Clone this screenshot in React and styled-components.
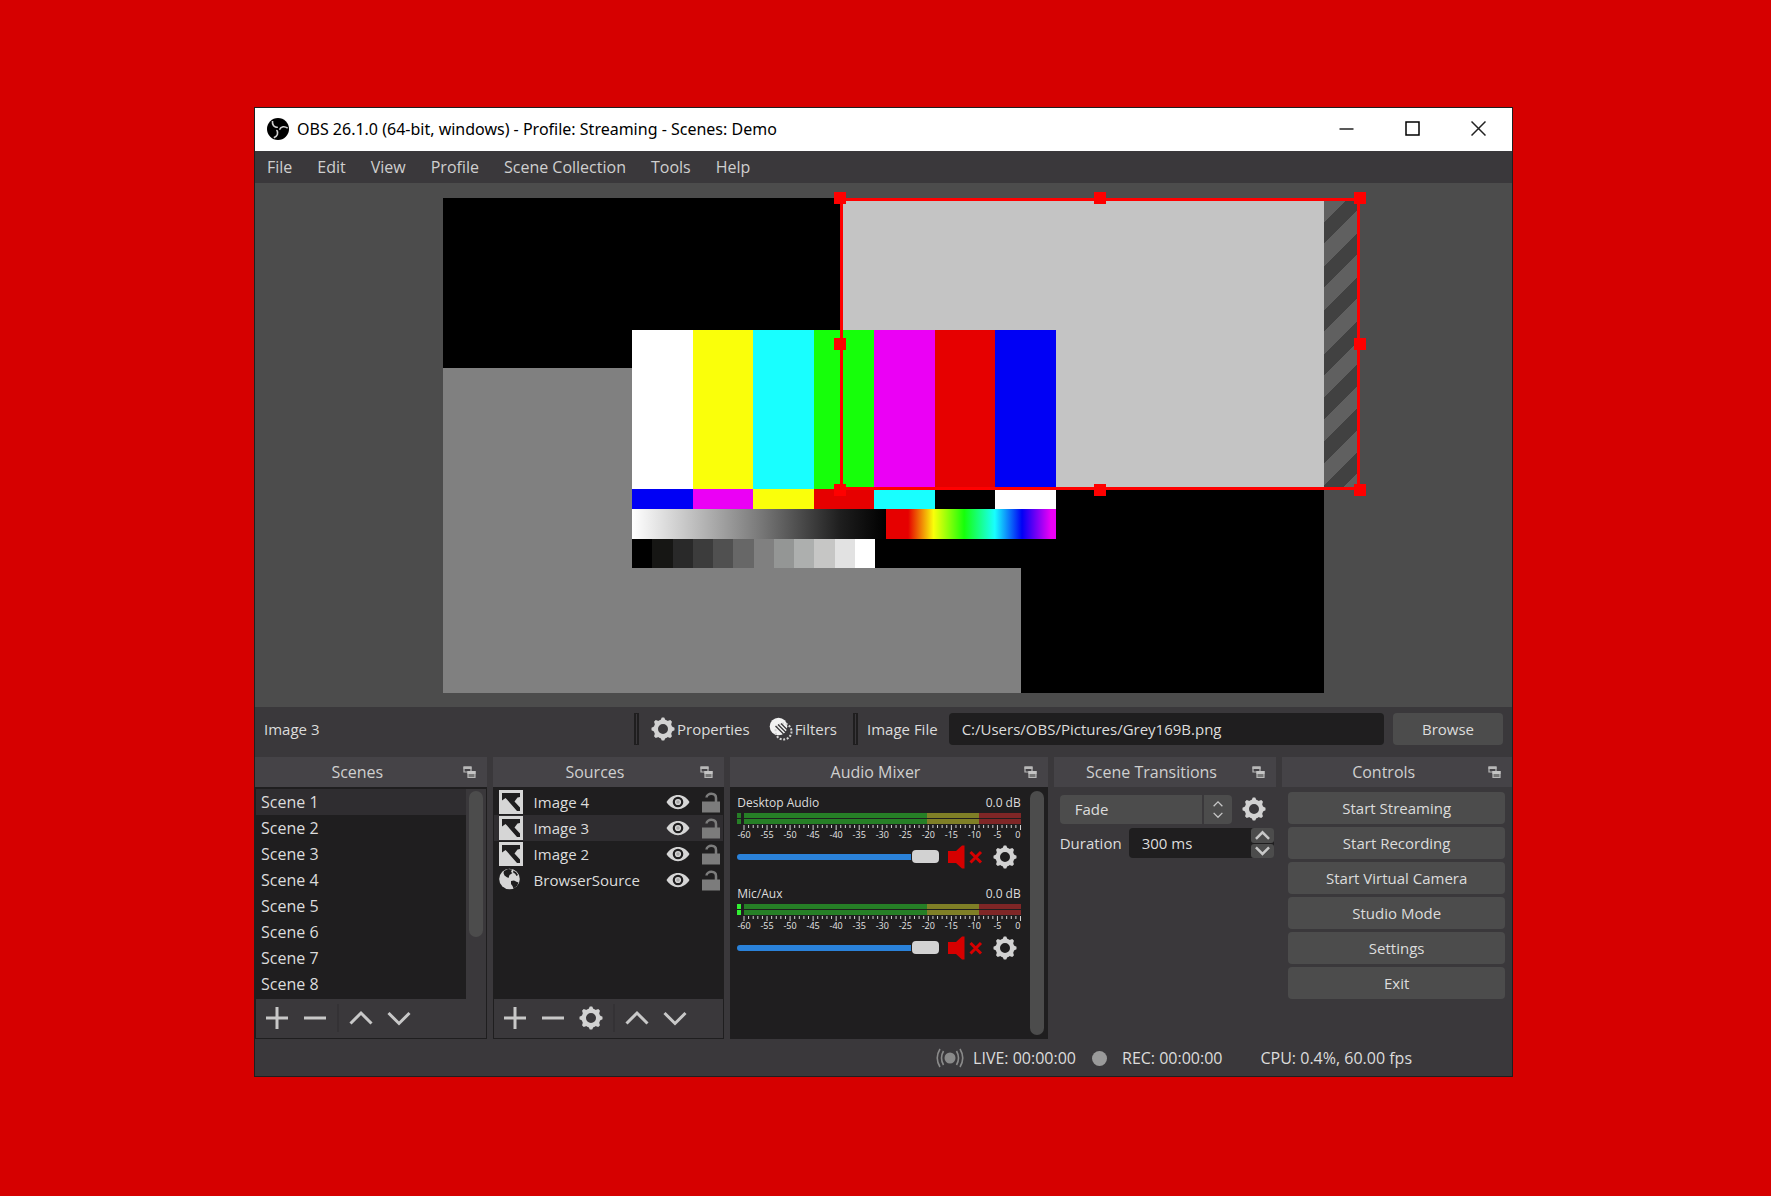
import React, { useState } from 'react';
import styled, { createGlobalStyle } from 'styled-components';

const scenes = ['Scene 1', 'Scene 2', 'Scene 3', 'Scene 4', 'Scene 5', 'Scene 6', 'Scene 7', 'Scene 8'];

const sources = [
    { name: 'Image 4', type: 'image' },
    { name: 'Image 3', type: 'image' },
    { name: 'Image 2', type: 'image' },
    { name: 'BrowserSource', type: 'browser' },
];

const menus = ['File', 'Edit', 'View', 'Profile', 'Scene Collection', 'Tools', 'Help'];

const controls = ['Start Streaming', 'Start Recording', 'Start Virtual Camera', 'Studio Mode', 'Settings', 'Exit'];

const bars = ['#fff', '#faff0a', '#18ffff', '#16ff0a', '#eb00f5', '#e60000', '#0000f5'];
const subBars = ['#0000f5', '#eb00f5', '#faff0a', '#e60000', '#18ffff', '#000', '#fff'];
const greys = ['#000', '#161614', '#292929', '#3c3c3c', '#505050', '#676767', '#808080', '#949695', '#adafae', '#c6c6c5', '#e2e2e2', '#fff'];

const handles = [[0, 0], [50, 0], [100, 0], [0, 50], [100, 50], [0, 100], [50, 100], [100, 100]];


/* ---------- icons ---------- */

const Logo = () => (
    <svg width="22" height="22" viewBox="0 0 22 22" aria-hidden="true">
        <circle cx="11" cy="11" r="11" fill="#000" />
        {[0, 120, 240].map((a) => (
            <path key={a} transform={`rotate(${a} 11 11)`} d="M5.500 3C5 7 7 9.500 11 9.500" fill="none" stroke="#d2d2d2" strokeWidth="1.600" />
        ))}
        <circle cx="11" cy="11" r="1.300" fill="#000" />
    </svg>
);

const Gear = () => (
    <svg width="24" height="24" viewBox="0 0 24 24" fill="#d2d2d2" aria-hidden="true">
        <circle cx="12" cy="12" r="7.200" fill="none" stroke="#d2d2d2" strokeWidth="4.400" />
        {[0, 45, 90, 135, 180, 225, 270, 315].map((a) => (
            <path key={a} transform={`rotate(${a} 12 12)`} d="M8.800 4.500L10.800 0.500H13.200L15.200 4.500Z" />
        ))}
    </svg>
);

const FilterIcon = () => (
    <svg width="24" height="24" viewBox="0 0 24 24" aria-hidden="true">
        <circle cx="9.500" cy="9.500" r="8.800" fill="#f2f2f2" />
        <circle cx="14.500" cy="14.500" r="8" fill="none" stroke="#d2d2d2" strokeWidth="2" strokeDasharray="2 1.600" />
        <path d="M9 7.500L17 15.500M6.500 9L14.500 17M12 6.500L18 12.500" stroke="#3a383b" strokeWidth="1.300" />
    </svg>
);

const FloatIcon = () => (
    <svg width="13" height="13" viewBox="0 0 13 13" aria-hidden="true">
        <path d="M1 1H8V6H1Z" fill="none" stroke="#b8b8b8" strokeWidth="1.200" />
        <path d="M0.500 0.500H8.500V3H0.500Z" fill="#b8b8b8" />
        <path d="M5 5.500H12V11.500H5Z" fill="#777" stroke="#b8b8b8" strokeWidth="1.200" />
        <path d="M4.500 5H12.500V8H4.500Z" fill="#c4c4c4" />
    </svg>
);

const ImageIcon = () => (
    <svg width="24" height="24" viewBox="0 0 24 24" aria-hidden="true">
        <path d="M0 0H24V24H0Z" fill="#d6d6d6" />
        <path d="M3 3H21V7L18.500 7.500L15.500 11.500L21 17.500V21H18L8 9.500L6.500 8L3 10.500Z" fill="#1f1e1f" />
    </svg>
);

const GlobeIcon = () => (
    <svg width="24" height="24" viewBox="0 0 24 24" aria-hidden="true">
        <circle cx="10.500" cy="11" r="10.300" fill="#d6d6d6" />
        <path d="M5 3L9 1L13 1.500L12 4L13.500 5L10.500 7L9.500 10L7.500 9L5.500 7.500L4.500 5Z" fill="#1f1e1f" />
        <path d="M12 13L15 12.500L18 14L19.500 14.500L18 18L14.500 20.500L13.500 18L12 16Z" fill="#1f1e1f" />
        <path d="M14 2.500L17 4L19 7L17.500 8L16 5.500L14.500 5Z" fill="#1f1e1f" />
    </svg>
);

const EyeIcon = () => (
    <svg width="24" height="16" viewBox="0 0 24 16" aria-hidden="true">
        <path d="M0.500 8C6 -1.500 18 -1.500 23.500 8C18 17.500 6 17.500 0.500 8Z" fill="#d6d6d6" />
        <circle cx="12" cy="8" r="4.200" fill="#d6d6d6" stroke="#1f1e1f" strokeWidth="2.200" />
        <circle cx="12" cy="8" r="1.800" fill="#a8a8a8" />
    </svg>
);

const LockIcon = () => (
    <svg width="18" height="21" viewBox="0 0 18 21" aria-hidden="true">
        <path d="M0 9.500H18V20.500H0Z" fill="#7c7c7c" />
        <path d="M4.500 5.500C5 0.500 14 0.500 14 6V10" fill="none" stroke="#7c7c7c" strokeWidth="2.500" />
    </svg>
);

const glyphs = {
    plus: 'M1 12H23M12 1V23',
    minus: 'M1 12H23',
    up: 'M1.500 17.500L12 7L22.500 17.500',
    down: 'M1.500 7L12 17.500L22.500 7',
};

const Stroke = ({ name, size = 24, width = 3 }) => (
    <svg width={size} height={size} viewBox="0 0 24 24" aria-hidden="true">
        <path d={glyphs[name]} fill="none" stroke="#c8c8c8" strokeWidth={width} />
    </svg>
);

const Speaker = () => (
    <svg width="36" height="24" viewBox="0 0 36 24" aria-hidden="true">
        <path d="M0 6H8L14 0.500H16.500V23.500H14L8 18H0Z" fill="#d60000" />
        <path d="M22.500 7L33 17.500M33 7L22.500 17.500" stroke="#d60000" strokeWidth="3" />
    </svg>
);

const LiveIcon = () => (
    <svg width="28" height="20" viewBox="0 0 28 20" fill="none" stroke="#8a8a8a" strokeWidth="1.600" aria-hidden="true">
        <circle cx="14" cy="10" r="5.500" fill="#8a8a8a" stroke="none" />
        <path d="M7.500 3Q3.500 10 7.500 17M4 1Q-1.500 10 4 19M20.500 3Q24.500 10 20.500 17M24 1Q29.500 10 24 19" />
    </svg>
);


/* ---------- audio meter ---------- */

// x positions are percentages of the scale, which runs from -60 to 0 dB
const Meter = ({ lit }) => (
    <MeterBox>
        <Peaks $lit={lit}><i /><i /></Peaks>
        <MeterScale>
            <LevelBar />
            <LevelBar />
            <svg width="100%" height="19" overflow="visible" aria-hidden="true">
                {Array.from({ length: 61 }, (_, i) => (
                    <line key={i} x1={`${i / 0.6}%`} x2={`${i / 0.6}%`} y1="0" y2={i % 5 ? 3 : 5} stroke="#d2d2d2" strokeWidth="1" />
                ))}
                {Array.from({ length: 13 }, (_, i) => (
                    <text key={i} x={`${i / 0.12}%`} y="13" textAnchor={i === 12 ? 'end' : 'middle'}>{i * 5 - 60}</text>
                ))}
            </svg>
        </MeterScale>
    </MeterBox>
);

const Channel = ({ name, lit }) => {

    const [volume, setVolume] = useState(100);

    return (
        <ChannelBox>
            <ChannelHead>
                <label htmlFor={name}>{name}</label>
                <span>0.0 dB</span>
            </ChannelHead>
            <Meter lit={lit} />
            <ChannelRow>
                <Slider id={name} type="range" min="0" max="100" value={volume} onChange={(e) => setVolume(e.target.value)} />
                <IconButton aria-label={`Unmute ${name}`}><Speaker /></IconButton>
                <IconButton aria-label={`${name} settings`}><Gear /></IconButton>
            </ChannelRow>
        </ChannelBox>
    );
};

const DockPanel = ({ title, children }) => (
    <Dock>
        <DockHeader>
            <h2>{title}</h2>
            <IconButton aria-label={`Undock ${title}`}><FloatIcon /></IconButton>
        </DockHeader>
        {children}
    </Dock>
);


const App = () => {

    const [scene, setScene] = useState('Scene 1');
    const [source, setSource] = useState('Image 3');

    return (
        <>
            <GlobalStyle />
            <Desktop>
                <Window>
                    <TitleBar>
                        <Logo />
                        <h1>OBS 26.1.0 (64-bit, windows) - Profile: Streaming - Scenes: Demo</h1>
                        <WindowButton aria-label="Minimize">
                            <svg width="15" height="15"><path d="M0.500 8H14.500" stroke="#222" strokeWidth="1.500" /></svg>
                        </WindowButton>
                        <WindowButton aria-label="Maximize">
                            <svg width="15" height="15"><path d="M1 1H14V14H1Z" fill="none" stroke="#000" strokeWidth="1.500" /></svg>
                        </WindowButton>
                        <WindowButton aria-label="Close">
                            <svg width="15" height="15"><path d="M0.500 0.500L14.500 14.500M14.500 0.500L0.500 14.500" stroke="#222" strokeWidth="1.500" /></svg>
                        </WindowButton>
                    </TitleBar>
                    <MenuBar>
                        {menus.map((m) => <button key={m}>{m}</button>)}
                    </MenuBar>

                    <Preview>
                        <Canvas>
                            <GreySource />
                            <SelectedSource />
                            <Overflow />
                            <TestCard>
                                <Swatches $columns={7}>{bars.map((c) => <Swatch key={c} $color={c} />)}</Swatches>
                                <Swatches $columns={7}>{subBars.map((c) => <Swatch key={c} $color={c} />)}</Swatches>
                                <Ramps><GreyRamp /><HueRamp /></Ramps>
                                <Steps>
                                    <Swatches $columns={12}>{greys.map((c) => <Swatch key={c} $color={c} />)}</Swatches>
                                </Steps>
                            </TestCard>
                            <Selection>
                                {handles.map(([x, y]) => <Handle key={`${x}-${y}`} $x={x} $y={y} />)}
                            </Selection>
                        </Canvas>
                    </Preview>

                    <ContextBar>
                        <SourceName>Image 3</SourceName>
                        <Divider />
                        <ContextButton><Gear />Properties</ContextButton>
                        <ContextButton><FilterIcon />Filters</ContextButton>
                        <Divider />
                        <label htmlFor="file">Image File</label>
                        <PathInput id="file" defaultValue="C:/Users/OBS/Pictures/Grey169B.png" />
                        <BrowseButton>Browse</BrowseButton>
                    </ContextBar>

                    <Docks>
                        <DockPanel title="Scenes">
                            <Framed>
                                <ListArea>
                                    <List>
                                        {scenes.map((s) => (
                                            <SceneRow key={s} $active={s === scene} onClick={() => setScene(s)}>{s}</SceneRow>
                                        ))}
                                    </List>
                                    <ScrollTrack><ScrollThumb $size="71%" /></ScrollTrack>
                                </ListArea>
                                <Toolbar>
                                    <button aria-label="Add scene"><Stroke name="plus" /></button>
                                    <button aria-label="Remove scene"><Stroke name="minus" /></button>
                                    <ToolSeparator />
                                    <button aria-label="Move scene up"><Stroke name="up" /></button>
                                    <button aria-label="Move scene down"><Stroke name="down" /></button>
                                </Toolbar>
                            </Framed>
                        </DockPanel>

                        <DockPanel title="Sources">
                            <Framed>
                                <ListArea>
                                    <List>
                                        {sources.map((s) => (
                                            <SourceRow key={s.name} $active={s.name === source} onClick={() => setSource(s.name)}>
                                                {s.type === 'image' ? <ImageIcon /> : <GlobeIcon />}
                                                <span>{s.name}</span>
                                                <IconButton aria-label={`Hide ${s.name}`}><EyeIcon /></IconButton>
                                                <IconButton aria-label={`Lock ${s.name}`}><LockIcon /></IconButton>
                                            </SourceRow>
                                        ))}
                                    </List>
                                </ListArea>
                                <Toolbar>
                                    <button aria-label="Add source"><Stroke name="plus" /></button>
                                    <button aria-label="Remove source"><Stroke name="minus" /></button>
                                    <button aria-label="Source settings"><Gear /></button>
                                    <ToolSeparator />
                                    <button aria-label="Move source up"><Stroke name="up" /></button>
                                    <button aria-label="Move source down"><Stroke name="down" /></button>
                                </Toolbar>
                            </Framed>
                        </DockPanel>

                        <DockPanel title="Audio Mixer">
                            <Mixer>
                                <Channels>
                                    <Channel name="Desktop Audio" />
                                    <Channel name="Mic/Aux" lit />
                                </Channels>
                                <MixerTrack><ScrollThumb $size="100%" /></MixerTrack>
                            </Mixer>
                        </DockPanel>

                        <DockPanel title="Scene Transitions">
                            <Transitions>
                                <FormRow>
                                    <SelectBox>
                                        <select aria-label="Transition" defaultValue="Fade">
                                            <option>Fade</option>
                                            <option>Cut</option>
                                        </select>
                                        <Arrows>
                                            <Stroke name="up" size={10} />
                                            <Stroke name="down" size={10} />
                                        </Arrows>
                                    </SelectBox>
                                    <IconButton aria-label="Transition settings"><Gear /></IconButton>
                                </FormRow>
                                <FormRow>
                                    <label htmlFor="duration">Duration</label>
                                    <SpinBox>
                                        <input id="duration" defaultValue="300 ms" />
                                        <SpinButtons>
                                            <button aria-label="Increase"><Stroke name="up" size={15} width={4} /></button>
                                            <button aria-label="Decrease"><Stroke name="down" size={15} width={4} /></button>
                                        </SpinButtons>
                                    </SpinBox>
                                </FormRow>
                            </Transitions>
                        </DockPanel>

                        <DockPanel title="Controls">
                            <ControlList>
                                {controls.map((c) => <ControlButton key={c}>{c}</ControlButton>)}
                            </ControlList>
                        </DockPanel>
                    </Docks>

                    <StatusBar>
                        <StatusItem $gap={9}><LiveIcon />LIVE: 00:00:00</StatusItem>
                        <StatusItem $gap={15}><RecDot />REC: 00:00:00</StatusItem>
                        <StatusItem $pad={22}>CPU: 0.4%, 60.00 fps</StatusItem>
                    </StatusBar>
                </Window>
            </Desktop>
        </>
    );
};

export default App;


const GlobalStyle = createGlobalStyle`
    * {
        box-sizing: border-box;
    }

    body {
        margin: 0;
        background: #d60000;
        color: #dcdcdc;
        font: 15px/20px 'Open Sans', 'Noto Sans', sans-serif;
    }

    button, input, select {
        font: inherit;
        color: inherit;
        border: none;
        outline: none;
        margin: 0;
        padding: 0;
    }

    button {
        background: none;
        cursor: pointer;
    }

    h1, h2, ul {
        margin: 0;
        padding: 0;
        font-weight: 400;
        list-style: none;
    }

    svg {
        display: block;
        flex: none;
    }
`;

const Desktop = styled.main`
    min-height: 100vh;
    padding: 107px 258px 119px 254px;
`;

const Window = styled.div`
    display: flex;
    flex-direction: column;
    background: #3a383b;
    border: 1px solid #1f1e1f;
`;

const TitleBar = styled.header`
    display: flex;
    align-items: center;
    height: 43px;
    padding: 0 1px 2px 12px;
    background: #fff;
    color: #000;

    h1 {
        flex: 1;
        margin-left: 8px;
        font-family: 'Noto Sans', 'Open Sans', sans-serif;
        font-size: 16px;
        line-height: 24px;
        white-space: nowrap;
    }
`;

const WindowButton = styled.button`
    display: flex;
    justify-content: center;
    align-items: center;
    width: 66px;
    height: 41px;
`;

const MenuBar = styled.nav`
    display: flex;
    gap: 25px;
    height: 32px;
    padding: 0 12px;
    font-size: 16px;
    color: #cfcfcf;
`;

const Preview = styled.section`
    display: flex;
    justify-content: center;
    align-items: center;
    height: 524px;
    background: #4c4c4c;
`;

const Canvas = styled.div`
    position: relative;
    flex: none;
    width: 881px;
    height: 495px;
    background: #000;
`;

const GreySource = styled.div`
    position: absolute;
    left: 0;
    bottom: 0;
    width: 578px;
    height: 325px;
    background: #808080;
`;

const SelectedSource = styled.div`
    position: absolute;
    left: 400px;
    top: 2px;
    right: 0;
    height: 290px;
    background: #c4c4c4;
`;

const Overflow = styled.div`
    position: absolute;
    left: 100%;
    top: 2px;
    width: 35px;
    height: 288px;
    background: repeating-linear-gradient(135deg, #606060 0 16px, #414141 16px 31px);
`;

const TestCard = styled.div`
    position: absolute;
    left: 189px;
    top: 132px;
    width: 424px;
    height: 238px;
    display: grid;
    grid-template-rows: 159px 20px 30px 29px;
    background: #000;
`;

const Swatches = styled.div`
    display: grid;
    grid-template-columns: repeat(${(p) => p.$columns}, 1fr);
`;

const Swatch = styled.div`
    background: ${(p) => p.$color};
`;

const Ramps = styled.div`
    display: grid;
    grid-template-columns: 254px 1fr;
`;

const GreyRamp = styled.div`
    background: linear-gradient(90deg, #fff, #7a7a7a 50%, #1e1e1e 82%, #000);
`;

const HueRamp = styled.div`
    background: linear-gradient(90deg, #e60000 13%, #faff0a 28%, #16ff0a 46%, #18ffff 64%, #0000f5 80%, #eb00f5 97%);
`;

const Steps = styled.div`
    display: grid;
    width: 243px;
`;

const Selection = styled.div`
    position: absolute;
    left: 397px;
    top: 0;
    width: 520px;
    height: 292px;
    border: 3px solid #f00;
`;

const Handle = styled.span`
    position: absolute;
    left: ${(p) => p.$x}%;
    top: ${(p) => p.$y}%;
    width: 12px;
    height: 12px;
    margin: ${(p) => p.$y / 50 * 3 - 9}px 0 0 ${(p) => p.$x / 50 * 3 - 9}px;
    background: #f00;
`;

const ContextBar = styled.section`
    display: flex;
    align-items: center;
    height: 50px;
    padding: 0 9px 7px;
`;

const SourceName = styled.div`
    width: 370px;
`;

const Divider = styled.div`
    width: 5px;
    height: 32px;
    background: #3a383b;
    border: 1px solid #1f1e1f;
    border-width: 1px 2px;
    margin-right: 9px;
`;

const ContextButton = styled.button`
    display: flex;
    align-items: center;
    gap: 2px;
    margin: 0 16px 0 3px;
`;

const PathInput = styled.input`
    flex: 1;
    min-width: 0;
    height: 32px;
    margin: 0 9px 0 11px;
    padding: 0 13px;
    background: #1f1e1f;
    border-radius: 4px;
`;

const BrowseButton = styled.button`
    width: 110px;
    height: 32px;
    background: #4c4c4c;
    border-radius: 4px;
`;

const Docks = styled.div`
    display: grid;
    grid-template-columns: 232fr 232fr 318fr 223fr 230fr;
    gap: 6px;
    height: 282px;
`;

const Dock = styled.section`
    display: flex;
    flex-direction: column;
    min-width: 0;
`;

const DockHeader = styled.div`
    display: flex;
    align-items: center;
    height: 30px;
    padding-right: 11px;
    background: #454347;

    h2 {
        flex: 1;
        padding-right: 3px;
        font-size: 16px;
        text-align: center;
        color: #cfcfcf;
    }
`;

const IconButton = styled.button`
    display: flex;
    align-items: center;
`;

const Framed = styled.div`
    flex: 1;
    display: flex;
    flex-direction: column;
    border: 1px solid #1f1e1f;
    border-top-width: 2px;
`;

const ListArea = styled.div`
    flex: 1;
    display: flex;
    background: #1f1e1f;
`;

const List = styled.ul`
    flex: 1;
`;

const SceneRow = styled.li`
    height: 26px;
    padding: 3px 5px;
    font-size: 16px;
    background: ${(p) => (p.$active ? '#2f2d30' : 'none')};
    cursor: pointer;
`;

const SourceRow = styled.li`
    display: flex;
    align-items: center;
    height: 26px;
    padding: 0 3px 0 5px;
    background: ${(p) => (p.$active ? '#2f2d30' : 'none')};

    span {
        flex: 1;
        margin-left: 11px;
    }

    button + button {
        margin-left: 12px;
    }
`;

const ScrollTrack = styled.div`
    width: 20px;
    padding: 2px 3px;
    background: #3a383b;
`;

const ScrollThumb = styled.div`
    width: 14px;
    height: ${(p) => p.$size};
    border-radius: 7px;
    background: #4c4c4c;
`;

const Toolbar = styled.div`
    display: flex;
    align-items: center;
    height: 39px;
    padding: 0 0 2px 2px;

    button {
        display: flex;
        justify-content: center;
        width: 38px;
    }
`;

const ToolSeparator = styled.div`
    width: 2px;
    height: 28px;
    margin: 0 3px;
    background: #343235;
`;

const Mixer = styled.div`
    flex: 1;
    display: flex;
    background: #1f1e1f;
    border-top: 1px solid #1f1e1f;
`;

const Channels = styled.div`
    flex: 1;
    padding: 5px 9px 0 7px;
`;

const MixerTrack = styled.div`
    padding: 3px 4px 4px 0;
`;

const ChannelBox = styled.div`
    height: 91px;
`;

const ChannelHead = styled.div`
    display: flex;
    justify-content: space-between;
    font-size: 12px;
`;

const MeterBox = styled.div`
    display: flex;
    gap: 3px;
`;

const Peaks = styled.div`
    width: 4px;

    i {
        display: block;
        height: 5px;
        margin-bottom: 1px;
        background: ${(p) => (p.$lit ? '#32f032' : '#267f26')};
    }
`;

const MeterScale = styled.div`
    flex: 1;

    text {
        font-size: 9px;
        fill: #e6e6e6;
    }
`;

const LevelBar = styled.div`
    height: 5px;
    margin-bottom: 1px;
    background: linear-gradient(90deg, #267f26 66%, #7f7f26 66% 85%, #7f2626 85%);
`;

const ChannelRow = styled.div`
    display: flex;
    align-items: center;
    gap: 9px;
    height: 26px;
    padding-right: 4px;
`;

const Slider = styled.input`
    flex: 1;
    min-width: 0;
    height: 13px;
    appearance: none;
    background: none;

    &::-webkit-slider-runnable-track {
        height: 6px;
        border-radius: 3px;
        background: #2a82da;
    }

    &::-webkit-slider-thumb {
        appearance: none;
        width: 27px;
        height: 13px;
        margin-top: -4px;
        border-radius: 4px;
        background: #d2d2d2;
        box-shadow: 0 0 0 1px #1f1e1f;
    }
`;

const Transitions = styled.div`
    display: flex;
    flex-direction: column;
    gap: 4px;
    padding: 7px 7px 7px 6px;
`;

const FormRow = styled.div`
    display: flex;
    align-items: center;
    justify-content: space-between;
    gap: 7px;
    height: 30px;

    & > button {
        margin-right: 3px;
    }
`;

const SelectBox = styled.div`
    flex: 1;
    display: flex;
    height: 29px;
    background: #4c4c4c;
    border-radius: 4px;
    margin-right: 3px;

    select {
        flex: 1;
        appearance: none;
        padding-left: 15px;
        background: none;
    }
`;

const Arrows = styled.div`
    display: flex;
    flex-direction: column;
    justify-content: center;
    align-items: center;
    gap: 1px;
    width: 30px;
    border-left: 2px solid #3a383b;
    pointer-events: none;
`;

const SpinBox = styled.div`
    display: flex;
    width: 145px;
    height: 30px;
    background: #1f1e1f;
    border-radius: 4px;

    input {
        flex: 1;
        min-width: 0;
        padding-left: 13px;
        background: none;
    }
`;

const SpinButtons = styled.div`
    display: grid;
    gap: 1px;
    width: 23px;

    button {
        display: flex;
        justify-content: center;
        align-items: center;
        min-height: 0;
        background: #4c4c4c;
        border-radius: 3px;
        overflow: hidden;
    }
`;

const ControlList = styled.div`
    display: flex;
    flex-direction: column;
    gap: 3px;
    padding: 5px 7px 0 6px;
`;

const ControlButton = styled.button`
    height: 32px;
    padding-bottom: 1px;
    background: #4c4c4c;
    border-radius: 4px;
`;

const StatusBar = styled.footer`
    display: flex;
    justify-content: flex-end;
    align-items: center;
    gap: 16px;
    height: 37px;
    padding: 1px 100px 0 0;
    font-size: 16px;
`;

const StatusItem = styled.div`
    display: flex;
    align-items: center;
    gap: ${(p) => p.$gap}px;
    padding-left: ${(p) => p.$pad}px;
`;

const RecDot = styled.span`
    width: 15px;
    height: 15px;
    border-radius: 50%;
    background: #9a9a9a;
`;
